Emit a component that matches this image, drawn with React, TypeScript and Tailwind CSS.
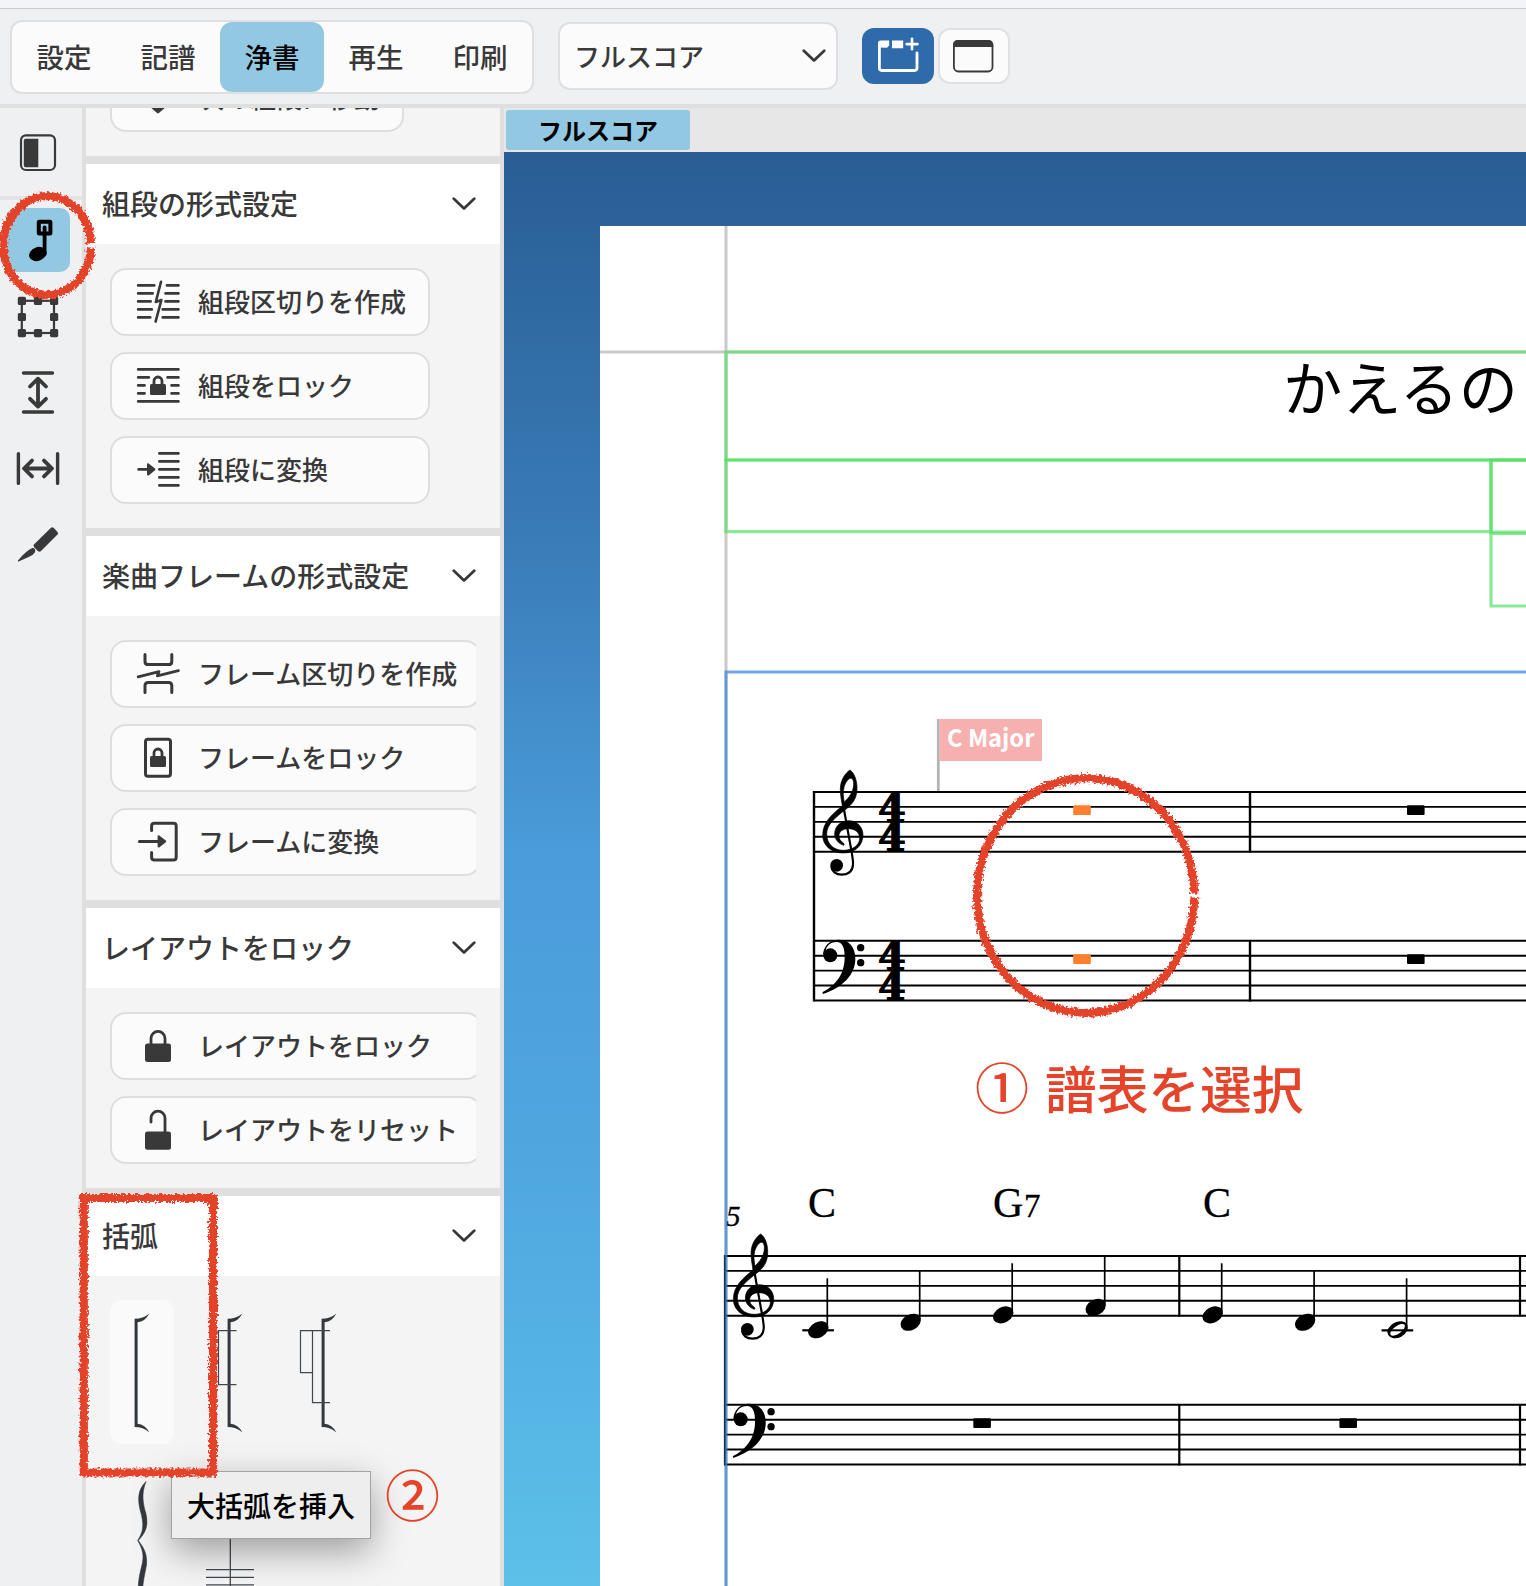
import type { ReactNode } from "react";

type IconProps = { children: ReactNode };

const modes = ["設定", "記譜", "浄書", "再生", "印刷"];

// 44px icon used inside the panel buttons
const Icon = ({ children }: IconProps) => (
  <svg
    width="44"
    height="44"
    viewBox="0 0 44 44"
    fill="none"
    stroke="#393939"
    strokeWidth="2.8"
    strokeLinecap="round"
    strokeLinejoin="round"
    className="shrink-0"
  >
    {children}
  </svg>
);

const Chevron = () => (
  <svg width="24" height="14" viewBox="0 0 24 14" fill="none" className="shrink-0">
    <path
      d="M1.8 1.8 12 11.4 22.2 1.8"
      stroke="#393939"
      strokeWidth="2.8"
      strokeLinecap="round"
      strokeLinejoin="round"
    />
  </svg>
);

const SmallLock = () => (
  <>
    <rect x="14" y="20" width="16" height="11" rx="1.5" fill="#393939" stroke="none" />
    <path d="M18 21v-4a4 4 0 0 1 8 0v4" />
  </>
);

const SystemBreakIcon = () => (
  <Icon>
    <path d="M2.2 5.4h16M2.2 13.4h14.4M2.2 21.4h12.4M2.2 29.4h13.5M2.2 37.4h12M31 5.4h11.4M29.6 13.4h12.8M29.6 21.4h12.8M26.8 29.4h15.6M26.8 37.4h15.6" />
    <path d="M25 1.8 19.8 22l5.6-2L19.6 41.6" strokeWidth="2.6" />
  </Icon>
);

const SystemLockIcon = () => (
  <Icon>
    <path d="M2.2 5.4h40.2M2.2 13.4h10.6M31.6 13.4h10.8M2.2 21.4h6.3M35.6 21.4h6.8M2.2 29.4h6.3M35.6 29.4h6.8M2.2 37.4h40.2" />
    <SmallLock />
  </Icon>
);

const SystemMakeIcon = () => (
  <Icon>
    <path d="M23.4 5.4h19M23.4 13.4h19M23.4 21.4h19M23.4 29.4h19M23.4 37.4h19M2.6 21.4h10" />
    <path d="M12 16.2v10.4l6.4-5.2z" fill="#393939" strokeWidth="2" />
  </Icon>
);

const FrameBreakIcon = () => (
  <Icon>
    <path d="M9 2.4v7q0 3.2 3.2 3.2h20.4q3.2 0 3.2-3.2v-7M9 40.6v-7q0-3.2 3.2-3.2h20.4q3.2 0 3.2 3.2v7" strokeWidth="3" />
    <path d="M2.2 24.8 23 19.6l-1.6 4.2 21-5.2" strokeWidth="2.8" />
  </Icon>
);

const FrameLockIcon = () => (
  <Icon>
    <rect x="9.5" y="3.2" width="25" height="37" rx="2.5" strokeWidth="3" />
    <SmallLock />
  </Icon>
);

const FrameMakeIcon = () => (
  <Icon>
    <path d="M15.6 10.4V6q0-2.8 2.8-2.8h19q2.8 0 2.8 2.8v31.200q0 2.800-2.800 2.800h-19q-2.800 0-2.800-2.800v-4.800M3.400 21.400h19" strokeWidth="3" />
    <path d="M22.600 16.200v10.400l6.600-5.200z" fill="#393939" strokeWidth="2" />
  </Icon>
);

const LockIcon = () => (
  <Icon>
    <rect x="9" y="19.4" width="26" height="18.6" rx="2.5" fill="#393939" stroke="none" />
    <path d="M15 20v-5.600a7 7 0 0 1 14 0V20" />
  </Icon>
);

const UnlockIcon = () => (
  <Icon>
    <rect x="9" y="23.4" width="26" height="18.4" rx="2.5" fill="#393939" stroke="none" />
    <path d="M15 14v-3.800a7 7 0 0 1 14 0V24" />
  </Icon>
);

type PanelItem = { label: string; icon: ReactNode };

const PanelSection = ({ title, items }: { title: string; items: PanelItem[] }) => (
  <section className="border-b-8 border-[#dfdfdf]">
    <SectionHeader title={title} />
    <div className="mx-6 overflow-hidden py-6">
      <div className="flex w-max flex-col gap-4">
        {items.map(({ label, icon }) => (
          <button
            key={label}
            className="flex h-[68px] items-center gap-[18px] rounded-2xl border-2 border-[#dedede] bg-[#fbfbfb] pr-[22px] pl-6 text-[26px] leading-none font-medium whitespace-nowrap"
          >
            {icon}
            <span className="pb-0.5">{label}</span>
          </button>
        ))}
      </div>
    </div>
  </section>
);

const SectionHeader = ({ title }: { title: string }) => (
  <div className="flex h-20 items-center justify-between bg-white pr-6 pl-4 text-[28px] leading-none font-medium">
    <span className="pb-0.5">{title}</span>
    <Chevron />
  </div>
);

const Toolbar = () => (
  <header className="flex h-[108px] flex-col border-b-4 border-[#dedfdf] bg-[#eef0f2]">
    <div className="h-[9px] shrink-0 border-b border-[#c8cacc] bg-[#f2f4f8]" />
    <div className="flex pl-2.5">
      <nav className="mt-[11px] flex h-[74px] rounded-xl border-2 border-[#dedfe0] bg-[#fbfbfb]">
        {modes.map((mode) => (
          <button
            key={mode}
            className={
              mode === "浄書"
                ? "w-[104px] rounded-xl bg-[#93c8e2] text-[27.5px] font-medium text-black"
                : "w-[104px] text-[27.5px] font-medium"
            }
          >
            {mode}
          </button>
        ))}
      </nav>
      <div className="mt-[13px] ml-6 flex h-[68px] w-[280px] items-center justify-between rounded-xl border-2 border-[#dedfe2] bg-[#fbfbfb] pr-2.5 pl-3.5 text-[26px] leading-none font-medium">
        <span className="pb-px">フルスコア</span>
        <Chevron />
      </div>
      <button className="mt-[19px] ml-6 flex h-14 w-[72px] items-center justify-center rounded-xl bg-[#2f6aaa]">
        <svg width="44" height="40" viewBox="0 -1.5 44 40" fill="none">
          <path
            d="M3.400 7v23.600q0 2.400 2.400 2.400h32.800q2.400 0 2.400-2.400V15.500"
            stroke="#fff"
            strokeWidth="2.800"
            strokeLinecap="round"
          />
          <path d="M2 10V5.500q0-2.600 2.600-2.600h8.600v5l-2.200 2.300zM16 3h11.200v7.800H16z" fill="#fff" />
          <path d="M36 1.200v10.600M30.700 6.600h10.800" stroke="#fff" strokeWidth="2.600" strokeLinecap="round" />
        </svg>
      </button>
      <button className="mt-[19px] ml-1 flex h-14 w-[72px] items-center justify-center rounded-xl border-2 border-[#e0e1e4] bg-[#fbfbfb]">
        <svg width="42" height="34" viewBox="1 -1 42 34" fill="none">
          <rect x="1.900" y="1" width="38.600" height="30.500" rx="4.500" stroke="#393939" strokeWidth="1.800" />
          <path d="M1 7V4.600Q1.400 0 5.600 0h31q4.200 0 4.600 4.600V7z" fill="#393939" />
        </svg>
      </button>
    </div>
  </header>
);

const Rail = () => (
  <aside className="flex w-[86px] shrink-0 flex-col border-r-4 border-[#dfdfdf] bg-[#eff0f2]">
    <div className="flex h-[92px] items-center border-b-4 border-[#e2e3e4] pl-[18px]">
      <svg width="40" height="40" viewBox="18 132 40 40" fill="none">
        <rect x="21" y="135.4" width="34" height="34.6" rx="5" stroke="#393939" strokeWidth="2.2" />
        <path d="M38.3 138.8v28.4H25.6q-1.8 0-1.8-1.8v-24.8q0-1.8 1.8-1.8z" fill="#393939" />
      </svg>
    </div>
    <div className="flex w-[76px] flex-col items-center pt-0.5">
      <div className="flex h-[76px] items-center">
        <div className="size-16 rounded-[10px] bg-[#93c8e2]">
          <svg width="64" height="64" viewBox="6 208 64 64" fill="none">
            <rect x="38.8" y="221.8" width="11.6" height="11.6" rx=".5" stroke="#000" strokeWidth="4" />
            <path d="M44.6 227.5V254" stroke="#000" strokeWidth="3.8" strokeLinecap="round" />
            <ellipse cx="37.8" cy="254" rx="9" ry="6.8" transform="rotate(-22 37.8 254)" fill="#000" />
          </svg>
        </div>
      </div>
      <div className="flex h-[76px] items-center">
        <svg width="44" height="44" viewBox="16 294 44 44" fill="#393939">
          <rect x="21.8" y="300.8" width="32.2" height="32.2" fill="none" stroke="#393939" strokeWidth="2.2" />
          {[
            [17.8, 296.8], [33.9, 296.8], [50, 296.8], [17.8, 312.9],
            [50, 312.9], [17.8, 329], [33.9, 329], [50, 329],
          ].map(([x, y]) => (
            <rect key={`${x}-${y}`} x={x} y={y} width="8.2" height="8.2" rx="1.6" />
          ))}
        </svg>
      </div>
      <div className="flex h-[76px] items-center">
        <svg width="44" height="44" viewBox="16 370 44 44" fill="none" stroke="#393939" strokeWidth="3.8" strokeLinecap="round" strokeLinejoin="round">
          <path d="M23.5 373h29M23.5 412h29" strokeWidth="3.400" />
          <path d="M38 379v27.5M30 386.5l8-7.8 8 7.8M30 398.8l8 7.8 8-7.8" />
        </svg>
      </div>
      <div className="flex h-[76px] items-center">
        <svg width="44" height="44" viewBox="16 446 44 44" fill="none" stroke="#393939" strokeWidth="3.8" strokeLinecap="round" strokeLinejoin="round">
          <path d="M18.4 453.8v29.6M57.6 453.8v29.6" strokeWidth="3.400" />
          <path d="M24 468.5h28M32 460.6l-8 7.9 8 7.9M44 460.6l8 7.9-8 7.9" />
        </svg>
      </div>
      <div className="flex h-[76px] items-center">
        <svg width="44" height="44" viewBox="16 522.5 44 44" fill="#393939">
          <path d="M51 528.3q1.3-1.2 2.6 0l3.9 4.2q1.2 1.3 0 2.6L41 551.6q-1.6 1.4-3.2 0l-3.6-3.8q-1.2-1.5 0-3z" />
          <path d="M32.4 548.5q1.2-.4 2.2.7 1.4 1.7.2 3.8-2.4 3.7-6.2 4.6l-10 4.4q-1.2.2-.6-1 8-9.8 14.4-12.5z" />
        </svg>
      </div>
    </div>
  </aside>
);

const BracketGlyph = () => (
  <path
    d="M134.6 1318.8Q143 1318.800 149.400 1313.400Q145 1321.600 137.600 1322.200V1423.800Q145 1424.400 149.400 1432.400Q143 1427 134.600 1427z"
    fill="#33383e"
    stroke="none"
  />
);

const Brackets = () => (
  <div className="relative flex-1">
    <div className="flex gap-[30px] px-6 pt-6">
      <div className="h-36 w-16 rounded-xl bg-[#fafafa]">
        <svg width="64" height="144" viewBox="110 1300 64 144">
          <BracketGlyph />
        </svg>
      </div>
      <svg width="64" height="144" viewBox="111 1300 64 144" fill="none" stroke="#41474f" strokeWidth="1.2">
        <BracketGlyph />
        <path d="M143.5 1330.7H125.5V1384.7H143.5" />
      </svg>
      <svg width="64" height="144" viewBox="111 1300 64 144" fill="none" stroke="#41474f" strokeWidth="1.2" className="overflow-visible">
        <BracketGlyph />
        <path d="M143 1330.7H113.5V1372.7H125.5M125.5 1330.7V1402.7H143" />
      </svg>
    </div>
    <svg width="64" height="110" viewBox="110 1476 64 110" className="absolute top-[200px] left-6">
      <path
        d="M146 1481.5C141 1494 143 1504 146 1514C149 1528 144 1534 138.3 1540.5C144 1548 149 1556 145.5 1570C143 1582 142 1590 142 1602L139 1602C137.5 1590 138 1580 141.5 1567C144.5 1555 143 1550 137.7 1540.5C143 1532 144 1527 141.5 1515C137 1500 137.5 1490 146 1481.5z"
        fill="#33383e"
        stroke="#33383e"
        strokeWidth=".6"
      />
    </svg>
    <svg width="50" height="60" viewBox="205 1526 50 60" stroke="#41474f" strokeWidth="1.3" className="absolute top-[250px] left-[119px]">
      <path d="M230.3 1526V1586M206 1569.7H254M206 1577.3H254M206 1584.8H254" />
    </svg>
    <div className="absolute top-[195px] left-[85px] flex h-[68px] w-[200px] items-center justify-center border border-[#a3a3a3] bg-[#eeeeee] text-[28px] leading-none font-medium whitespace-nowrap text-black shadow-[0_12px_36px_rgba(0,0,0,0.36)]">
      大括弧を挿入
    </div>
  </div>
);

const Panel = () => (
  <div className="flex w-[418px] shrink-0 flex-col overflow-hidden border-r-4 border-[#dfdfdf] bg-[#f4f4f4]">
    {/* last button of the section that is scrolled off */}
    <div className="relative h-14 shrink-0 overflow-hidden border-b-8 border-[#dfdfdf]">
      <button className="absolute bottom-6 left-6 flex h-[68px] items-center gap-[18px] rounded-2xl border-2 border-[#dedede] bg-[#fbfbfb] pr-[22px] pl-6 text-[26px] leading-none font-medium whitespace-nowrap">
        <Icon>
          <path d="M22 10v24M14 29l8 7 8-7z" fill="#393939" />
        </Icon>
        <span className="pb-0.5">次の組段に移動</span>
      </button>
    </div>
    <PanelSection
      title="組段の形式設定"
      items={[
        { label: "組段区切りを作成", icon: <SystemBreakIcon /> },
        { label: "組段をロック", icon: <SystemLockIcon /> },
        { label: "組段に変換", icon: <SystemMakeIcon /> },
      ]}
    />
    <PanelSection
      title="楽曲フレームの形式設定"
      items={[
        { label: "フレーム区切りを作成", icon: <FrameBreakIcon /> },
        { label: "フレームをロック", icon: <FrameLockIcon /> },
        { label: "フレームに変換", icon: <FrameMakeIcon /> },
      ]}
    />
    <PanelSection
      title="レイアウトをロック"
      items={[
        { label: "レイアウトをロック", icon: <LockIcon /> },
        { label: "レイアウトをリセット", icon: <UnlockIcon /> },
      ]}
    />
    <SectionHeader title="括弧" />
    <Brackets />
  </div>
);

const Staff = ({ x, y }: { x: number; y: number }) => (
  <path
    d={[0, 1, 2, 3, 4].map((i) => `M${x} ${y + i * 14.92}H1526`).join("")}
    stroke="#000"
    strokeWidth="1.9"
  />
);

const TrebleClef = ({ x, y }: { x: number; y: number }) => (
  <g transform={`translate(${x} ${y}) scale(.33333)`}>
    <path
      fillRule="evenodd"
      d="M150 210C136 219 121 240 121 268C121 288 125 303 127 318C100 340 68 365 68 405C68 440 98 459 130 459C165 459 189 437 189 405C189 380 170 362 147 362C120 362 104 380 104 402C104 418 116 431 131 436C134 434 132 430 129 428C120 422 117 415 117 407C117 395 128 386 145 386C165 386 179 397 179 415C179 435 158 451 130 451C100 451 80 430 80 402C80 375 105 353 135 330C158 312 172 295 171 262C171 240 162 218 150 210zM154 235C162 238 163 255 158 270C152 286 143 297 133 306C129 290 129 275 132 262C136 247 146 233 154 235z"
      stroke="#000"
      strokeWidth="2"
    />
    <path
      d="M129 312L156 462C158 478 160 485 159 494C158 515 143 524 125 524C107 524 95 513 94 500"
      fill="none"
      stroke="#000"
      strokeWidth="6.5"
    />
    <circle cx="110" cy="496" r="19" />
  </g>
);

const BassClef = ({ x, y }: { x: number; y: number }) => (
  <g transform={`translate(${x} ${y}) scale(.33333)`}>
    <path d="M69 767C69 738 90 719 116 719C148 719 166 742 166 776C166 824 128 862 69 882L67 877C105 858 134 825 134 772C134 742 127 726 110 726C93 726 80 736 77 752z" />
    <circle cx="91" cy="766" r="21" />
    <circle cx="182" cy="743" r="11" />
    <circle cx="182" cy="788" r="11" />
  </g>
);

const TimeSignature = ({ y }: { y: number }) => (
  <g
    fontFamily="'DejaVu Serif', serif"
    fontWeight="700"
    fontSize="40"
    textAnchor="middle"
    stroke="#000"
    strokeWidth="1.2"
  >
    <text x="892" y={y + 29.6}>4</text>
    <text x="892" y={y + 59.4}>4</text>
  </g>
);

const Rest = ({ x, y, fill = "#000" }: { x: number; y: number; fill?: string }) => (
  <rect x={x} y={y} width="17.6" height="9.6" rx="1" fill={fill} />
);

const notes = [
  { x: 818.3, y: 1329.8, top: 1278.3, ledger: true },
  { x: 910.7, y: 1322.3, top: 1270.7 },
  { x: 1003.2, y: 1314.9, top: 1263.3 },
  { x: 1095.7, y: 1307.4, top: 1256 },
  { x: 1212.7, y: 1314.9, top: 1263.3 },
  { x: 1305.1, y: 1322.3, top: 1270.7 },
  { x: 1397.6, y: 1329.8, top: 1278.3, ledger: true, half: true },
];

const Score = () => (
  <svg width="926" height="1360" viewBox="600 226 926 1360" className="block">
    {/* page margins */}
    <path d="M726 226V1586M600 352H1526" stroke="#c9c9c9" strokeWidth="3" fill="none" />

    {/* text frames */}
    <g fill="none" stroke="#52de62" strokeOpacity=".68" strokeWidth="3.2">
      <path d="M1540 352H726V460H1540" />
      <path d="M1540 460H726V531.7H1491V460" />
      <path d="M1540 532H1491V460H1540" />
      <path d="M1540 533.5H1491V606H1540" />
    </g>
    <text x="1283" y="410.5" fontSize="59.2" fontFamily="'Noto Sans CJK JP', sans-serif">
      かえるの
    </text>

    {/* first system */}
    <Staff x={814} y={792} />
    <Staff x={814} y={940.8} />
    <path d="M814 791V1001.4M1250 791V852.6M1250 940V1001.4" stroke="#000" strokeWidth="2.4" />
    <TrebleClef x={800} y={700} />
    <BassClef x={800} y={700} />
    <TimeSignature y={792} />
    <TimeSignature y={940.8} />
    <Rest x={1073.2} y={805.3} fill="#ff7f2e" />
    <Rest x={1073.2} y={954.3} fill="#ff7f2e" />
    <Rest x={1407} y={805.3} />
    <Rest x={1407} y={954.3} />

    {/* key signature signpost */}
    <path d="M938.3 719V791" stroke="#b4b4b4" strokeWidth="2.8" />
    <rect x="939.7" y="719" width="102.3" height="42" fill="#f7b0b0" />
    <text
      x="947"
      y="746.8"
      fontSize="24.5"
      fontWeight="700"
      fill="#fff"
      textLength="87.500"
      lengthAdjust="spacingAndGlyphs"
      fontFamily="'Noto Sans CJK JP', sans-serif"
    >
      C Major
    </text>

    {/* second system */}
    <Staff x={725} y={1256} />
    <Staff x={725} y={1404.8} />
    <path
      d="M725 1255V1465.4M1179.3 1255V1316.6M1179.3 1404V1465.4M1520 1255V1316.6M1520 1404V1465.4"
      stroke="#000"
      strokeWidth="2.2"
    />
    <TrebleClef x={710.7} y={1164} />
    <BassClef x={710.4} y={1164} />
    <Rest x={973.3} y={1418.3} />
    <Rest x={1339.4} y={1418.3} />
    {notes.map((n) => (
      <g key={n.x}>
        {n.ledger && <path d={`M${n.x - 16} 1330.3h31.6`} stroke="#000" strokeWidth="2.2" />}
        <path d={`M${n.x + 9} ${n.y - 3}V${n.top}`} stroke="#000" strokeWidth="1.7" />
        <ellipse cx={n.x} cy={n.y} rx="10.8" ry="7.8" transform={`rotate(-28 ${n.x} ${n.y})`} />
        {n.half && (
          <>
            <ellipse cx={n.x} cy={n.y} rx="8.6" ry="3.8" fill="#fff" transform={`rotate(-35 ${n.x} ${n.y})`} />
            <path d={`M${n.x - 8} 1330.3h16`} stroke="#000" strokeWidth="2" />
          </>
        )}
      </g>
    ))}
    <g fontFamily="'Liberation Serif', serif" fontSize="42" stroke="#000" strokeWidth=".3">
      <text x="808" y="1216.7">C</text>
      <text x="993" y="1216.7">G</text>
      <text x="1024" y="1216.7" fontSize="33">7</text>
      <text x="1203" y="1216.7">C</text>
      <text x="726" y="1226" fontSize="29" fontStyle="italic">5</text>
    </g>

    {/* music frame */}
    <path d="M1540 672H726V1600" fill="none" stroke="#3b87d8" strokeOpacity=".72" strokeWidth="3" />
  </svg>
);

const Annotations = () => (
  <div className="pointer-events-none absolute inset-0 text-[#e5432a]">
    <svg width="1526" height="1586" viewBox="0 0 1526 1586" fill="none" className="absolute inset-0">
      <filter id="crayon" x="-10%" y="-10%" width="120%" height="120%">
        <feTurbulence type="fractalNoise" baseFrequency=".42" numOctaves="2" seed="4" />
        <feDisplacementMap in="SourceGraphic" scale="7" xChannelSelector="R" yChannelSelector="G" />
      </filter>
      <g stroke="#e5432a" strokeWidth="8.2">
        <path filter="url(#crayon)" d="M91 243.500A43.900 49.300 0 1 0 91 247.500" />
        <path filter="url(#crayon)" d="M1194.300 893.500A108.600 117.300 0 1 0 1194.300 897.500" />
        <path filter="url(#crayon)" d="M83.800 1198H213V1472.500H83.800z" />
      </g>
    </svg>
    <div className="absolute top-[1060px] left-[975px] flex gap-[17px] text-[52px] leading-[52px] font-medium whitespace-nowrap">
      <span className="w-[53px] text-[54px]">①</span>
      <span className="pt-px text-[51.7px]">譜表を選択</span>
    </div>
    <span className="absolute top-[1465px] left-[385px] text-[55px] leading-[55px] font-medium">②</span>
  </div>
);

export default function App() {
  return (
    <div
      lang="ja"
      className="relative flex h-[1586px] w-[1526px] flex-col overflow-hidden bg-[#eff0f2] font-['Noto_Sans_CJK_JP',sans-serif] text-[#393939]"
    >
      <Toolbar />
      <div className="flex min-h-0 flex-1">
        <Rail />
        <Panel />
        <main className="flex min-w-0 flex-1 flex-col">
          <div className="flex h-11 shrink-0 items-center bg-[#e7e7e7] pl-0.5">
            <div className="flex h-10 w-[184px] items-center justify-center rounded-[3px] bg-[#93c8e2] text-2xl leading-none font-bold text-black">
              フルスコア
            </div>
          </div>
          <div className="min-h-0 flex-1 bg-[linear-gradient(180deg,#295d94_0%,#3a7db9_28%,#4a9cda_49%,#50a8e0_72%,#5cc0e9_100%)] pt-[74px] pl-24">
            <div className="bg-white">
              <Score />
            </div>
          </div>
        </main>
      </div>
      <Annotations />
    </div>
  );
}
